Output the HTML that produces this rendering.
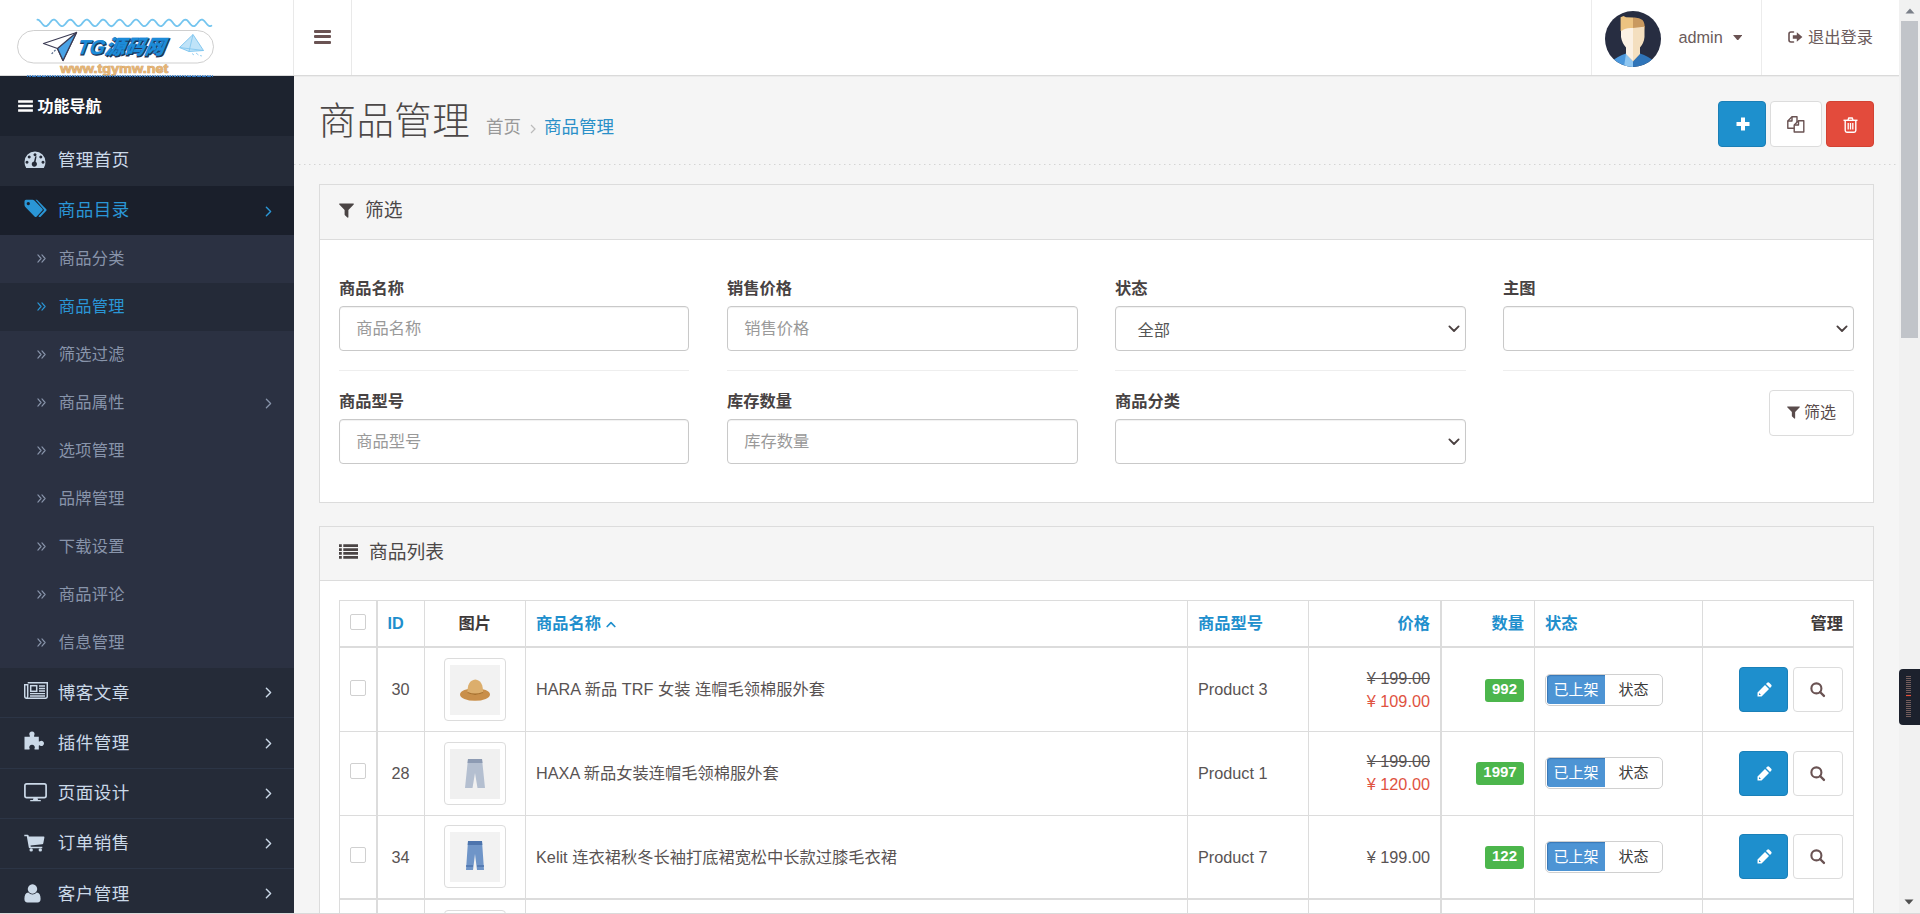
<!DOCTYPE html>
<html lang="zh-CN">
<head>
<meta charset="utf-8">
<title>商品管理</title>
<style>
*{box-sizing:border-box;margin:0;padding:0}
html,body{width:1920px;height:914px;overflow:hidden;background:#f5f5f5}
body{position:relative;font-family:"Liberation Sans","Noto Sans CJK SC",sans-serif;font-size:16.25px;color:#4c4646;line-height:1.42857}
svg{display:block}
a{color:inherit;text-decoration:none}
ul{list-style:none}

/* ---------- header ---------- */
#header{position:absolute;left:0;top:0;width:1899px;height:76px;background:#fff;border-bottom:1px solid #dadada;box-shadow:0 1px 0 #ececec;z-index:5}
#logo{position:absolute;left:0;top:0;width:294px;height:75px;border-right:1px solid #e9e9e9}
#burger{position:absolute;left:294px;top:0;width:58px;height:75px;border-right:1px solid #e9e9e9}
#burger i{position:absolute;left:20px;width:17px;height:3px;background:#6a5353;border-radius:1px}
#user{position:absolute;left:1591px;top:0;width:171px;height:75px;border-left:1px solid #ececec;border-right:1px solid #ececec}
#user .name{position:absolute;left:86.5px;top:26px;font-size:16.25px;line-height:22px;color:#6b5b5b}
#user .caret{position:absolute;left:141px;top:35px;width:0;height:0;border-left:4.7px solid transparent;border-right:4.7px solid transparent;border-top:5.5px solid #6a5353}
#logout{position:absolute;left:1762px;top:0;width:137px;height:75px}
#logout .t{position:absolute;left:46px;top:25px;font-size:16.25px;line-height:24px;color:#6b5b5b;white-space:nowrap}

/* ---------- sidebar ---------- */
#side{position:absolute;left:0;top:76px;width:294px;height:838px;background:#2b3142;z-index:6;overflow:hidden}
#side .navh{height:60px;background:#1d232f;color:#fff;font-size:16px;font-weight:bold;position:relative}
#side .navh span{position:absolute;left:37.5px;top:18.7px;line-height:24px}
#side li.m{height:50px;background:#252b38;position:relative;color:#cbd9e8;font-size:17.5px}
#side li.m + li.m{border-top:1px solid #2c3546}
#side li.m .tx{position:absolute;left:57.8px;top:12px;letter-spacing:.5px;line-height:25px;white-space:nowrap}
#side li.m .ic{position:absolute;left:24px;top:14px}
#side li.m .ar{position:absolute;left:264.5px;top:19.5px}
#side li.m + li.m.act{border-top:none}
#side li.m.act{background:#1a1f2b;color:#2a96d6}
#side li.m.act .tx{top:12px}
#side li.m.act .ar{top:19.5px}
#side li.s{height:48.03px;background:#2b3142;position:relative;color:#8894aa;font-size:16.25px}
#side li.s .tx{position:absolute;left:58.7px;top:10.5px;letter-spacing:.25px;line-height:24px;white-space:nowrap}
#side li.s .dd{position:absolute;left:37px;top:18.5px}
#side li.s .ar{position:absolute;left:264.5px;top:18.5px}
#side li.s.act{background:#242a38;color:#2a96d6}

/* ---------- content ---------- */
#main{position:absolute;left:294px;top:76px;width:1605px;height:838px;background:#f5f5f5;overflow:hidden}
#ph{position:absolute;left:0;top:0;width:1605px;height:89px;background:repeating-linear-gradient(90deg,#d4d4d4 0,#d4d4d4 1px,#e6e6e6 1px,#e6e6e6 2px,transparent 2px,transparent 5px) left bottom/100% 1px no-repeat}
#ph h1{position:absolute;left:24.5px;letter-spacing:.4px;top:18px;font-size:37.5px;font-weight:300;line-height:54px;color:#4c4848;white-space:nowrap}
#ph .bc{position:absolute;left:192px;top:39px;font-size:17.5px;line-height:25px;color:#999;white-space:nowrap}
#ph .bc b{font-weight:normal;color:#2b90c8}
.tb{position:absolute;top:25px;height:46px;border-radius:4px}
.panel{position:absolute;left:25px;width:1555px;background:#fff;border:1px solid #dcdcdc}
.panel .hd{height:55px;background:#f5f5f5;border-bottom:1px solid #dcdcdc;position:relative;font-size:18.75px;color:#4c4848}
.panel .hd .tx{position:absolute;top:12px;line-height:27px;white-space:nowrap}
.panel .hd svg{position:absolute}
label.l{position:absolute;font-weight:bold;font-size:16.25px;line-height:22px;color:#474242;white-space:nowrap}
.inp{position:absolute;width:350px;height:45px;border:1px solid #c9c9c9;border-radius:4px;background:#fff;font-size:16.25px;color:#999;line-height:43px;padding-left:16.3px;white-space:nowrap;box-shadow:inset 0 1px 1px rgba(0,0,0,.06)}
.inp.sel{color:#555}
.inp .chev{position:absolute;right:5px;top:18px}
.hr{position:absolute;width:350px;height:1px;background:#eee}

/* table */
#tbl{position:absolute;left:19px;top:73px;width:1516px}
.c{position:absolute;white-space:nowrap}
.vl{position:absolute;top:0;width:1px;background:#dcdcdc}
.hl{position:absolute;left:0;height:1px;background:#dcdcdc}
.th{position:absolute;font-weight:bold;font-size:16.25px;line-height:22px;white-space:nowrap;color:#3f3a3a}
.th.a{color:#1e8fcd}
.cb{position:absolute;width:16px;height:16px;border:1px solid #d0d0d0;border-radius:2px;background:#fff}
.thumb{position:absolute;width:62px;height:63px;border:1px solid #dcdcdc;border-radius:4px;background:#fff}
.thumb .im{position:absolute;left:5px;top:6px;width:50px;height:50px;background:#f0f0f0;overflow:hidden}
.td{position:absolute;font-size:16.25px;line-height:22px;white-space:nowrap;color:#595353}
.badge{position:absolute;height:23px;border-radius:3px;background:#4cb64c;color:#fff;font-weight:bold;font-size:15px;line-height:20px;text-align:center}
.tog{position:absolute;width:118px;height:32px;border:1px solid #d0d0d0;border-radius:5px;background:#fff;overflow:hidden;font-size:15px;line-height:27px}
.tog .on{position:absolute;left:1px;top:0;width:58px;height:29px;padding-top:1px;box-shadow:inset 1px 1px 1px rgba(20,70,130,.35);background:#4d94d4;color:#fff;text-align:center;border-radius:3px 0 0 3px}
.tog .off{position:absolute;left:59px;top:1px;width:57px;height:28px;color:#3a3a3a;text-align:center}
.be{position:absolute;width:49px;height:45px;border-radius:4px;background:#1e8fcd;border:1px solid #1a80b8}
.bs{position:absolute;width:50px;height:45px;border-radius:4px;background:#fff;border:1px solid #dcdcdc}

/* scrollbar */
#sb{position:absolute;left:1899px;top:0;width:21px;height:914px;background:#f1f1f1;z-index:9}
#sb .thumb2{position:absolute;left:2px;top:21px;width:17px;height:317px;background:#c1c4c9}
#wd{position:absolute;left:1899px;top:669px;width:21px;height:56px;background:#1c212d;border-radius:4px 0 0 4px;z-index:10}
#bl{position:absolute;left:0;top:913px;width:1920px;height:1px;background:#dadada;z-index:11}
</style>
</head>
<body>

<div id="header">
  <div id="logo">
    <svg width="293" height="76" viewBox="0 0 293 76">
      <path d="M37.4 19.60 L38.4 19.84 L39.4 20.52 L40.4 21.54 L41.4 22.76 L42.4 24.00 L43.4 25.08 L44.4 25.85 L45.4 26.19 L46.4 26.05 L47.4 25.47 L48.4 24.51 L49.4 23.32 L50.4 22.06 L51.4 20.93 L52.4 20.09 L53.4 19.65 L54.4 19.68 L55.4 20.17 L56.4 21.06 L57.4 22.21 L58.4 23.46 L59.4 24.64 L60.4 25.56 L61.4 26.10 L62.4 26.17 L63.4 25.78 L64.4 24.97 L65.4 23.86 L66.4 22.61 L67.4 21.41 L68.4 20.42 L69.4 19.78 L70.4 19.60 L71.4 19.90 L72.4 20.63 L73.4 21.68 L74.4 22.91 L75.4 24.14 L76.4 25.19 L77.4 25.91 L78.4 26.20 L79.4 26.01 L80.4 25.37 L81.4 24.37 L82.4 23.16 L83.4 21.92 L84.4 20.81 L85.4 20.01 L86.4 19.62 L87.4 19.71 L88.4 20.26 L89.4 21.18 L90.4 22.36 L91.4 23.61 L92.4 24.76 L93.4 25.64 L94.4 26.13 L95.4 26.15 L96.4 25.70 L97.4 24.85 L98.4 23.71 L99.4 22.46 L100.4 21.27 L101.4 20.32 L102.4 19.74 L103.4 19.61 L104.4 19.96 L105.4 20.74 L106.4 21.82 L107.4 23.06 L108.4 24.28 L109.4 25.30 L110.4 25.97 L111.4 26.20 L112.4 25.95 L113.4 25.26 L114.4 24.24 L115.4 23.01 L116.4 21.78 L117.4 20.70 L118.4 19.94 L119.4 19.61 L120.4 19.75 L121.4 20.35 L122.4 21.32 L123.4 22.51 L124.4 23.76 L125.4 24.89 L126.4 25.73 L127.4 26.16 L128.4 26.12 L129.4 25.62 L130.4 24.72 L131.4 23.56 L132.4 22.31 L133.4 21.14 L134.4 20.23 L135.4 19.70 L136.4 19.63 L137.4 20.04 L138.4 20.85 L139.4 21.97 L140.4 23.21 L141.4 24.42 L142.4 25.40 L143.4 26.02 L144.4 26.20 L145.4 25.89 L146.4 25.16 L147.4 24.10 L148.4 22.86 L149.4 21.63 L150.4 20.59 L151.4 19.88 L152.4 19.60 L153.4 19.80 L154.4 20.45 L155.4 21.45 L156.4 22.66 L157.4 23.91 L158.4 25.01 L159.4 25.80 L160.4 26.18 L161.4 26.08 L162.4 25.53 L163.4 24.59 L164.4 23.41 L165.4 22.16 L166.4 21.02 L167.4 20.14 L168.4 19.66 L169.4 19.66 L170.4 20.11 L171.4 20.97 L172.4 22.11 L173.4 23.37 L174.4 24.55 L175.4 25.50 L176.4 26.07 L177.4 26.18 L178.4 25.82 L179.4 25.04 L180.4 23.95 L181.4 22.71 L182.4 21.50 L183.4 20.48 L184.4 19.82 L185.4 19.60 L186.4 19.86 L187.4 20.55 L188.4 21.59 L189.4 22.81 L190.4 24.05 L191.4 25.12 L192.4 25.87 L193.4 26.19 L194.4 26.04 L195.4 25.43 L196.4 24.46 L197.4 23.27 L198.4 22.02 L199.4 20.89 L200.4 20.06 L201.4 19.64 L202.4 19.69 L203.4 20.20 L204.4 21.10 L205.4 22.26 L206.4 23.51 L207.4 24.68 L208.4 25.59 L209.4 26.11 L210.4 26.17 L211.4 25.75" fill="none" stroke="#74c5ef" stroke-width="1.8" stroke-linecap="round"/>
      <rect x="17.5" y="30.5" width="196" height="32.5" rx="16.25" fill="#fff" stroke="#cfcfcf" stroke-width="1"/>
      <path d="M43.5 43.5 L76.5 32.5 L63 60.5 L57.5 48.5 Z" fill="#fff" stroke="#3c3c54" stroke-width="1.3" stroke-linejoin="round"/>
      <path d="M76.5 32.5 L63 60.5 L57.5 48.5 Z" fill="#4aa3e6" stroke="#3c3c54" stroke-width="1.3" stroke-linejoin="round"/>
      <path d="M55.5 50 L51 54.5" stroke="#56698a" stroke-width="1.2" stroke-dasharray="2 1.5"/>
      <g font-family="'Liberation Sans','Noto Sans CJK SC',sans-serif" font-size="20" font-weight="900" font-style="italic" transform="skewX(-10) translate(6.2 0)"><text x="80.8" y="54.6" fill="#1d3557" stroke="#1d3557" stroke-width="1.2" textLength="87" lengthAdjust="spacingAndGlyphs">TG源码网</text><text x="80" y="53.8" fill="#1c8bd8" stroke="#1c8bd8" stroke-width="0.3" textLength="87" lengthAdjust="spacingAndGlyphs">TG源码网</text></g>
      <path d="M179.5 47.5 L193 34.5 L203.5 50.5 L189 51.5 Z" fill="#bfe3f8" stroke="#7cc4ee" stroke-width="0.9" stroke-linejoin="round"/>
      <path d="M179.5 47.5 L203.5 50.5 M193 34.5 L189 51.5" stroke="#7cc4ee" stroke-width="0.8" fill="none"/>
      <path d="M192 53.5 l2 1.5 M196 53 l2.5 2 M200 55.5 l2 0.5" stroke="#9ed3f3" stroke-width="1"/>
      <text x="60.3" y="73" font-family="'Liberation Sans',sans-serif" font-size="13.5" font-weight="bold" fill="#e6b473" stroke="#c79a63" stroke-width="0.7" paint-order="stroke" textLength="108" lengthAdjust="spacingAndGlyphs">www.tgymw.net</text>
      <path d="M27 75.7 H213" stroke="#2f78c4" stroke-width="0.9" stroke-dasharray="1.5 1"/>
    </svg>
  </div>
  <div id="burger"><i style="top:30px"></i><i style="top:35px"></i><i style="top:41px"></i></div>
  <div id="user">
    <svg style="position:absolute;left:13px;top:11px" width="56" height="56" viewBox="0 0 56 56">
      <defs><clipPath id="av"><circle cx="28" cy="28" r="28"/></clipPath></defs>
      <g clip-path="url(#av)">
        <rect width="56" height="56" fill="#272d41"/>
        <path d="M4 52 Q13 45 21 42.500 L28 50.500 L28 56 L4 56 Z" fill="#4a97dc"/>
        <path d="M52 52 Q43 45 35 42.500 L28 50.500 L28 56 L52 56 Z" fill="#2f74b8"/>
        <path d="M21 42.500 L28 50.500 L28 56 L19 56 Z" fill="#8ec6f1"/>
        <path d="M16 17 L16 26 Q17 32 21 36.500 L21 43 L28 50.500 L28 14 Z" fill="#fbf1e4"/>
        <path d="M28 14 L28 50.500 L35 43 L35 36.500 Q39 32 39.500 26 L39.500 15 Z" fill="#f4dfbf"/>
        <path d="M15.600 20 L15.600 6.300 L18.500 5 L21 6.200 L28 6.500 L28 17 Q20 16.500 17.300 19.500 Z" fill="#ecc381"/>
        <path d="M28 6.500 Q34 6 37.500 9 Q40.200 12 39.700 19 L39 15.800 L28 17 Z" fill="#c9995f"/>
      </g>
    </svg>
    <span class="name">admin</span><svg style="position:absolute;left:140.800px;top:34.800px" width="9.500" height="5.600" viewBox="0 0 9.5 5.6"><path d="M0 0 H9.500 L4.750 5.600 Z" fill="#6a5353"/></svg>
  </div>
  <div id="logout">
    <svg style="position:absolute;left:26px;top:31px" width="15" height="12" viewBox="0 0 15 12"><path d="M5.500 1 H3 Q1 1 1 3 V9 Q1 11 3 11 H5.500" fill="none" stroke="#6a5353" stroke-width="1.600" stroke-linecap="round"/><path d="M4.800 4.300 H8.800 V1.300 L14.400 6 L8.800 10.700 V7.700 H4.800 Z" fill="#6a5353"/></svg>
    <span class="t">退出登录</span>
  </div>
</div>


<div id="side">
  <div class="navh"><div style="position:absolute;left:27px;top:0;width:186px;height:1px;background:repeating-linear-gradient(90deg,#2f78c4 0,#2f78c4 1.5px,transparent 1.5px,transparent 2.5px)"></div><svg style="position:absolute;left:18px;top:23.5px" width="15" height="12" viewBox="0 0 16 13"><path d="M0 0.300 H16 V3 H0 Z M0 5.200 H16 V7.900 H0 Z M0 10.100 H16 V12.800 H0 Z" fill="#fff"/></svg><span>功能导航</span></div>
  <ul>
    <li class="m" style="height:50px"><svg class="ic" style="top:15px" width="22" height="18" viewBox="0 0 22 18"><path fill-rule="evenodd" fill="currentColor" d="M11 0.5 A10.5 10.5 0 0 1 21.5 11 Q21.5 14.5 19.8 17 H2.2 Q0.5 14.500 0.5 11 A10.5 10.5 0 0 1 11 0.5 Z M11 2.2 a1.5 1.5 0 1 0 0.01 0 Z M5.2 4.6 a1.5 1.5 0 1 0 0.01 0 Z M16.8 4.6 a1.5 1.5 0 1 0 0.01 0 Z M3 9.8 a1.5 1.5 0 1 0 0.01 0 Z M19 9.8 a1.5 1.5 0 1 0 0.01 0 Z M12.6 5.2 L11.6 10.8 A2.6 2.6 0 1 1 10 10.5 L11.3 5 Z"/></svg><span class="tx">管理首页</span></li>
    <li class="m act" style="height:49.4px"><svg class="ic" style="top:13px" width="23" height="19" viewBox="0 0 23 19"><path fill="currentColor" d="M11.5 0.8 H13 L22.3 10.2 Q23 11 22.3 11.800 L16.6 17.700 Q15.8 18.4 15 17.8 L14.4 17.2 L19.6 11.800 Q20.3 11 19.6 10.2 Z"/><path fill-rule="evenodd" fill="currentColor" d="M0.5 2.3 Q0.5 0.8 2 0.8 H8.6 Q9.6 0.8 10.4 1.600 L18.400 9.800 Q19.200 10.700 18.400 11.600 L12.5 17.700 Q11.7 18.400 10.800 17.700 L1.800 8.600 Q0.5 7.300 0.5 6 Z M4.3 3 a1.6 1.600 0 1 0 0.01 0 Z"/></svg><span class="tx">商品目录</span><svg class="ar" width="7" height="11" viewBox="0 0 8 13"><path d="M1.5 1.5 L6.5 6.5 L1.5 11.5" fill="none" stroke="currentColor" stroke-width="1.7" stroke-linecap="round" stroke-linejoin="round"/></svg></li>
    <li class="s"><svg class="dd" width="9" height="9" viewBox="0 0 10 10"><path d="M1 1 L4.5 5 L1 9 M5.5 1 L9 5 L5.5 9" fill="none" stroke="currentColor" stroke-width="1.3" stroke-linecap="round" stroke-linejoin="round"/></svg><span class="tx">商品分类</span></li>
    <li class="s act"><svg class="dd" width="9" height="9" viewBox="0 0 10 10"><path d="M1 1 L4.5 5 L1 9 M5.5 1 L9 5 L5.5 9" fill="none" stroke="currentColor" stroke-width="1.3" stroke-linecap="round" stroke-linejoin="round"/></svg><span class="tx">商品管理</span></li>
    <li class="s"><svg class="dd" width="9" height="9" viewBox="0 0 10 10"><path d="M1 1 L4.5 5 L1 9 M5.5 1 L9 5 L5.5 9" fill="none" stroke="currentColor" stroke-width="1.3" stroke-linecap="round" stroke-linejoin="round"/></svg><span class="tx">筛选过滤</span></li>
    <li class="s"><svg class="dd" width="9" height="9" viewBox="0 0 10 10"><path d="M1 1 L4.5 5 L1 9 M5.5 1 L9 5 L5.5 9" fill="none" stroke="currentColor" stroke-width="1.3" stroke-linecap="round" stroke-linejoin="round"/></svg><span class="tx">商品属性</span><svg class="ar" width="7" height="11" viewBox="0 0 8 13"><path d="M1.5 1.5 L6.5 6.5 L1.5 11.5" fill="none" stroke="currentColor" stroke-width="1.5" stroke-linecap="round" stroke-linejoin="round"/></svg></li>
    <li class="s"><svg class="dd" width="9" height="9" viewBox="0 0 10 10"><path d="M1 1 L4.5 5 L1 9 M5.5 1 L9 5 L5.5 9" fill="none" stroke="currentColor" stroke-width="1.3" stroke-linecap="round" stroke-linejoin="round"/></svg><span class="tx">选项管理</span></li>
    <li class="s"><svg class="dd" width="9" height="9" viewBox="0 0 10 10"><path d="M1 1 L4.5 5 L1 9 M5.5 1 L9 5 L5.5 9" fill="none" stroke="currentColor" stroke-width="1.3" stroke-linecap="round" stroke-linejoin="round"/></svg><span class="tx">品牌管理</span></li>
    <li class="s"><svg class="dd" width="9" height="9" viewBox="0 0 10 10"><path d="M1 1 L4.5 5 L1 9 M5.5 1 L9 5 L5.5 9" fill="none" stroke="currentColor" stroke-width="1.3" stroke-linecap="round" stroke-linejoin="round"/></svg><span class="tx">下载设置</span></li>
    <li class="s"><svg class="dd" width="9" height="9" viewBox="0 0 10 10"><path d="M1 1 L4.5 5 L1 9 M5.5 1 L9 5 L5.5 9" fill="none" stroke="currentColor" stroke-width="1.3" stroke-linecap="round" stroke-linejoin="round"/></svg><span class="tx">商品评论</span></li>
    <li class="s"><svg class="dd" width="9" height="9" viewBox="0 0 10 10"><path d="M1 1 L4.5 5 L1 9 M5.5 1 L9 5 L5.5 9" fill="none" stroke="currentColor" stroke-width="1.3" stroke-linecap="round" stroke-linejoin="round"/></svg><span class="tx">信息管理</span></li>
    <li class="m" style="height:49.6px"><svg class="ic" style="top:14.3px" width="24" height="17" viewBox="0 0 24 17"><g fill="none" stroke="currentColor" stroke-width="1.5"><path d="M3.7 0.7 H23.300 V14.300 Q23.300 16.300 21.300 16.300 H2.700 Q0.700 16.300 0.700 14.300 V2.700 H3.700 V14.300 Q3.700 15.300 2.700 15.300"/><rect x="6.7" y="3.7" width="6" height="5.6" stroke-width="1.5"/><path d="M15 4 H21 M15 6.500 H21 M15 9 H21 M6 11.700 H21 M6 14 H21" stroke-width="1.3"/></g></svg><span class="tx" style="top:13px">博客文章</span><svg class="ar" width="7" height="11" viewBox="0 0 8 13"><path d="M1.5 1.5 L6.5 6.5 L1.5 11.5" fill="none" stroke="currentColor" stroke-width="1.7" stroke-linecap="round" stroke-linejoin="round"/></svg></li>
    <li class="m" style="height:50.8px"><svg class="ic" style="top:13px" width="21" height="19" viewBox="0 0 21 19"><path fill="currentColor" d="M0.5 5.800 H5.400 Q6.300 5.800 5.800 4.700 Q4.800 3 5.600 1.800 Q6.500 0.500 8 0.500 Q9.600 0.500 10.300 1.800 Q11 3 10.100 4.700 Q9.700 5.800 10.600 5.800 H14.800 V10 Q14.800 10.900 15.900 10.300 Q17.500 9.400 18.800 10.200 Q20.100 11.100 20 12.500 Q19.900 14 18.700 14.700 Q17.500 15.400 15.900 14.500 Q14.800 14 14.800 15 V18.500 H10.900 Q10.100 18.500 10.500 17.600 Q11.300 16 10.400 14.900 Q9.500 13.800 8 13.800 Q6.400 13.800 5.600 14.900 Q4.800 16 5.600 17.600 Q6 18.500 5.100 18.500 H0.500 Z"/></svg><span class="tx" style="top:12.6px">插件管理</span><svg class="ar" width="7" height="11" viewBox="0 0 8 13"><path d="M1.5 1.5 L6.5 6.5 L1.5 11.5" fill="none" stroke="currentColor" stroke-width="1.7" stroke-linecap="round" stroke-linejoin="round"/></svg></li>
    <li class="m"><svg class="ic" style="top:14px" width="23" height="19" viewBox="0 0 23 19"><rect x="0.9" y="0.9" width="21.2" height="13.700" rx="1.800" fill="none" stroke="currentColor" stroke-width="1.7"/><path d="M9.5 14.800 H13.500 L14 17 H9 Z M6.200 17 H16.800 V18.300 H6.200 Z" fill="currentColor"/></svg><span class="tx">页面设计</span><svg class="ar" width="7" height="11" viewBox="0 0 8 13"><path d="M1.5 1.5 L6.5 6.5 L1.5 11.5" fill="none" stroke="currentColor" stroke-width="1.7" stroke-linecap="round" stroke-linejoin="round"/></svg></li>
    <li class="m"><svg class="ic" style="top:15px" width="21" height="18" viewBox="0 0 21 18"><path fill="currentColor" d="M0.300 0.700 H3.600 Q4.400 0.700 4.600 1.600 L4.800 2.600 H19.700 Q20.600 2.600 20.400 3.500 L19.300 9.300 Q19.100 10.100 18.300 10.200 L6.500 11.500 L6.800 12.800 H18.300 V14.300 H5.800 Q5 14.300 4.800 13.500 L2.800 2.300 H0.300 Z"/><circle cx="7.200" cy="15.900" r="1.700" fill="currentColor"/><circle cx="16.300" cy="15.900" r="1.700" fill="currentColor"/></svg><span class="tx">订单销售</span><svg class="ar" width="7" height="11" viewBox="0 0 8 13"><path d="M1.5 1.5 L6.5 6.5 L1.5 11.5" fill="none" stroke="currentColor" stroke-width="1.7" stroke-linecap="round" stroke-linejoin="round"/></svg></li>
    <li class="m"><svg class="ic" style="top:15px" width="17" height="19" viewBox="0 0 17 19"><path fill="currentColor" d="M8.500 0.300 A4.700 4.700 0 1 1 8.490 0.300 Z M4.300 8.600 Q6.200 10.500 8.500 10.500 Q10.800 10.500 12.700 8.600 Q16.600 9 16.600 14.800 Q16.600 18.600 13.500 18.600 H3.500 Q0.400 18.600 0.400 14.800 Q0.400 9 4.300 8.600 Z"/></svg><span class="tx" style="top:12.6px">客户管理</span><svg class="ar" width="7" height="11" viewBox="0 0 8 13"><path d="M1.5 1.5 L6.5 6.5 L1.5 11.5" fill="none" stroke="currentColor" stroke-width="1.7" stroke-linecap="round" stroke-linejoin="round"/></svg></li>
  </ul>
</div>


<div id="main">
  <div id="ph">
    <h1>商品管理</h1>
    <div class="bc">首页<svg style="display:inline-block;margin:0 8px 0 9px;vertical-align:-1px" width="6" height="10" viewBox="0 0 6 10"><path d="M1 1 L5 5 L1 9" fill="none" stroke="#bbb" stroke-width="1.2"/></svg><b>商品管理</b></div>
    <div class="tb" style="left:1424px;width:48px;background:#1e90cd;border:1px solid #1b7fb6"><svg style="position:absolute;left:17px;top:15px" width="14" height="14" viewBox="0 0 14 14"><path d="M5 0.500 H9 V5 H13.500 V9 H9 V13.500 H5 V9 H0.500 V5 H5 Z" fill="#fff"/></svg></div>
    <div class="tb" style="left:1476px;width:52px;background:#fff;border:1px solid #dcdcdc"><svg style="position:absolute;left:16px;top:14px" width="18" height="17" viewBox="0 0 18 17"><g fill="#fff" stroke="#6a5353" stroke-width="1.400" stroke-linejoin="round"><path d="M5 0.800 H10 V12.200 H0.800 V5 Z"/><path d="M5 0.800 V5 H0.800" fill="none"/><path d="M11.500 4.800 H16.800 V16 H7.200 V9 Z"/><path d="M11.500 4.800 V9 H7.200" fill="none"/></g></svg></div>
    <div class="tb" style="left:1532px;width:48px;background:#e34b3c;border:1px solid #d24233"><svg style="position:absolute;left:16px;top:15px" width="15" height="16" viewBox="0 0 15 16"><g fill="none" stroke="#fff" stroke-width="1.400"><path d="M0.500 3.300 H14.500"/><path d="M5 3 L5.800 1 H9.200 L10 3"/><path d="M2.200 3.500 V13.500 Q2.200 15.200 3.900 15.200 H11.100 Q12.800 15.200 12.800 13.500 V3.500"/><path d="M5.200 6 V12.500 M7.500 6 V12.500 M9.800 6 V12.500" stroke-width="1.300"/></g></svg></div>
  </div>
  <div class="panel" style="top:108px;height:319px">
    <div class="hd"><svg style="left:19px;top:18px" width="15" height="15" viewBox="0 0 15 15"><path d="M0.600 0.500 H14.400 Q15.200 0.700 14.700 1.500 L9.400 6.900 V14.200 Q9.200 15 8.400 14.500 L5.900 12.200 Q5.600 11.900 5.600 11.500 V6.900 L0.300 1.500 Q-0.200 0.700 0.600 0.500 Z" fill="#4a4444"/></svg><span class="tx" style="left:45px">筛选</span></div>
    <label class="l" style="left:19px;top:92px">商品名称</label>
    <div class="inp" style="left:19px;top:121px">商品名称</div>
    <div class="hr" style="left:19px;top:185px"></div>
    <label class="l" style="left:407px;top:92px">销售价格</label>
    <div class="inp" style="width:351px;left:407px;top:121px">销售价格</div>
    <div class="hr" style="width:351px;left:407px;top:185px"></div>
    <label class="l" style="left:795px;top:92px">状态</label>
    <div class="inp sel" style="width:351px;left:795px;top:121px;padding-left:21.5px;line-height:46px">全部<svg class="chev" width="12" height="8.300" viewBox="0 0 13 9"><path d="M1.5 1.5 L6.5 6.5 L11.500 1.5" fill="none" stroke="#4a4040" stroke-width="2" stroke-linecap="round" stroke-linejoin="round"/></svg></div>
    <div class="hr" style="width:351px;left:795px;top:185px"></div>
    <label class="l" style="left:1183px;top:92px">主图</label>
    <div class="inp sel" style="width:351px;left:1183px;top:121px"><svg class="chev" width="12" height="8.300" viewBox="0 0 13 9"><path d="M1.5 1.5 L6.5 6.5 L11.500 1.5" fill="none" stroke="#4a4040" stroke-width="2" stroke-linecap="round" stroke-linejoin="round"/></svg></div>
    <div class="hr" style="width:351px;left:1183px;top:185px"></div>
    <label class="l" style="left:19px;top:205px">商品型号</label>
    <div class="inp" style="left:19px;top:234px">商品型号</div>
    <label class="l" style="left:407px;top:205px">库存数量</label>
    <div class="inp" style="width:351px;left:407px;top:234px">库存数量</div>
    <label class="l" style="left:795px;top:205px">商品分类</label>
    <div class="inp sel" style="width:351px;left:795px;top:234px"><svg class="chev" width="12" height="8.300" viewBox="0 0 13 9"><path d="M1.5 1.5 L6.5 6.5 L11.500 1.5" fill="none" stroke="#4a4040" stroke-width="2" stroke-linecap="round" stroke-linejoin="round"/></svg></div>
    <div style="position:absolute;left:1449px;top:205px;width:85px;height:46px;border:1px solid #dcdcdc;border-radius:4px;background:#fff"><svg style="position:absolute;left:17px;top:15px" width="13" height="13" viewBox="0 0 15 15"><path d="M0.600 0.500 H14.400 Q15.200 0.700 14.700 1.500 L9.400 6.900 V14.200 Q9.200 15 8.400 14.500 L5.900 12.200 Q5.600 11.900 5.600 11.500 V6.900 L0.300 1.500 Q-0.200 0.700 0.600 0.500 Z" fill="#5a4c4c"/></svg><span style="position:absolute;left:34px;top:10px;font-size:16px;line-height:23px;color:#5a4c4c;white-space:nowrap">筛选</span></div>
  </div>
  <div class="panel" style="top:450px;height:420px;border-bottom:none">
    <div class="hd" style="height:54px"><svg style="left:19px;top:17.3px" width="19" height="15" viewBox="0 0 19 15"><path d="M0 0.300 H2.800 V3 H0 Z M4.300 0.300 H19 V3 H4.300 Z M0 4.200 H2.800 V6.900 H0 Z M4.300 4.200 H19 V6.900 H4.300 Z M0 8.100 H2.800 V10.800 H0 Z M4.300 8.100 H19 V10.800 H4.300 Z M0 12 H2.800 V14.700 H0 Z M4.300 12 H19 V14.700 H4.300 Z" fill="#4a4444"/></svg><span class="tx" style="left:49px">商品列表</span></div>
    <div id="tbl">
      <div class="vl" style="left:0px;width:1px;height:330px"></div>
      <div class="vl" style="left:37px;width:2px;height:330px"></div>
      <div class="vl" style="left:85px;width:1px;height:330px"></div>
      <div class="vl" style="left:186px;width:1px;height:330px"></div>
      <div class="vl" style="left:848px;width:1px;height:330px"></div>
      <div class="vl" style="left:969px;width:1px;height:330px"></div>
      <div class="vl" style="left:1101px;width:2px;height:330px"></div>
      <div class="vl" style="left:1195px;width:1px;height:330px"></div>
      <div class="vl" style="left:1363px;width:1px;height:330px"></div>
      <div class="vl" style="left:1514px;width:1px;height:330px"></div>
      <div class="hl" style="top:0px;height:1px;width:1515px"></div>
      <div class="hl" style="top:46px;height:2px;width:1515px"></div>
      <div class="hl" style="top:131px;height:1px;width:1515px"></div>
      <div class="hl" style="top:215px;height:1px;width:1515px"></div>
      <div class="hl" style="top:298px;height:2px;width:1515px"></div>
      <div class="cb" style="left:11px;top:14px"></div>
      <div class="th a" style="left:48.6px;top:12px">ID</div>
      <div class="th" style="left:119.500px;top:12px">图片</div>
      <div class="th a" style="left:197px;top:12px">商品名称<svg style="display:inline-block;margin-left:4.5px;vertical-align:1px" width="10" height="7" viewBox="0 0 10 7"><path d="M1.200 5.500 L5 1.700 L8.800 5.500" fill="none" stroke="#1e8fcd" stroke-width="1.700" stroke-linecap="round" stroke-linejoin="round"/></svg></div>
      <div class="th a" style="left:859px;top:12px">商品型号</div>
      <div class="th a" style="right:425px;top:12px">价格</div>
      <div class="th a" style="right:331px;top:12px">数量</div>
      <div class="th a" style="left:1206px;top:12px">状态</div>
      <div class="th" style="right:12px;top:12px">管理</div>
      <div class="cb" style="left:11px;top:80px"></div>
      <div class="td" style="left:52.500px;top:78px">30</div>
      <div class="thumb" style="left:105px;top:58px"><div class="im"><svg width="50" height="50" viewBox="0 0 50 50"><rect width="50" height="50" fill="#f2f2f2"/><ellipse cx="25" cy="29.500" rx="15" ry="6.300" fill="#c98f4a"/><path d="M17.500 28 Q17 15.500 25.300 14.500 Q33.500 15.500 33 28 Q25 31.500 17.500 28 Z" fill="#dcae6c"/><path d="M17.500 27.500 Q25 31 33 27.500" stroke="#a8712f" stroke-width="1.300" fill="none"/></svg></div></div>
      <div class="td" style="left:197px;top:78px">HARA 新品 TRF 女装 连帽毛领棉服外套</div>
      <div class="td" style="left:859px;top:78px">Product 3</div>
      <div class="td" style="right:425px;top:67px;text-decoration:line-through">¥ 199.00</div>
      <div class="td" style="right:425px;top:90px;color:#e0533f">¥ 109.00</div>
      <div class="badge" style="right:331px;top:79px;width:39px">992</div>
      <div class="tog" style="left:1206px;top:74px"><span class="on">已上架</span><span class="off">状态</span></div>
      <div class="be" style="left:1400px;top:67px"><svg style="position:absolute;left:15.600px;top:13px" width="17" height="17" viewBox="0 0 17 17"><path d="M11.200 1.800 Q12.200 0.800 13.200 1.800 L15.200 3.800 Q16.200 4.800 15.200 5.800 L14 7 L10 3 Z M9 4 L13 8 L5.500 15.500 H1.500 V11.500 Z M3 12 V14 H5 Z" fill="#fff" fill-rule="evenodd"/></svg></div>
      <div class="bs" style="left:1454px;top:67px"><svg style="position:absolute;left:16.300px;top:14px" width="15.500" height="15.500" viewBox="0 0 17 17"><circle cx="7" cy="7" r="5.500" fill="none" stroke="#6a5353" stroke-width="2.300"/><path d="M11 11 L15.300 15.300" stroke="#6a5353" stroke-width="2.600" stroke-linecap="round"/></svg></div>
      <div class="cb" style="left:11px;top:163px"></div>
      <div class="td" style="left:52.500px;top:161.6px">28</div>
      <div class="thumb" style="left:105px;top:142px"><div class="im"><svg width="50" height="50" viewBox="0 0 50 50"><rect width="50" height="50" fill="#f0f0f0"/><path d="M18 10 H32 L35 39 H27.500 L25 24 L22.500 39 H15 Z" fill="#b4bfd0"/><path d="M18 10 H32 L32.500 14 H17.500 Z" fill="#8d9bb3"/></svg></div></div>
      <div class="td" style="left:197px;top:161.6px">HAXA 新品女装连帽毛领棉服外套</div>
      <div class="td" style="left:859px;top:161.6px">Product 1</div>
      <div class="td" style="right:425px;top:150px;text-decoration:line-through">¥ 199.00</div>
      <div class="td" style="right:425px;top:173px;color:#e0533f">¥ 120.00</div>
      <div class="badge" style="right:331px;top:162px;width:48px">1997</div>
      <div class="tog" style="left:1206px;top:157px"><span class="on">已上架</span><span class="off">状态</span></div>
      <div class="be" style="left:1400px;top:151px"><svg style="position:absolute;left:15.600px;top:13px" width="17" height="17" viewBox="0 0 17 17"><path d="M11.200 1.800 Q12.200 0.800 13.200 1.800 L15.200 3.800 Q16.200 4.800 15.200 5.800 L14 7 L10 3 Z M9 4 L13 8 L5.500 15.500 H1.500 V11.500 Z M3 12 V14 H5 Z" fill="#fff" fill-rule="evenodd"/></svg></div>
      <div class="bs" style="left:1454px;top:151px"><svg style="position:absolute;left:16.300px;top:14px" width="15.500" height="15.500" viewBox="0 0 17 17"><circle cx="7" cy="7" r="5.500" fill="none" stroke="#6a5353" stroke-width="2.300"/><path d="M11 11 L15.300 15.300" stroke="#6a5353" stroke-width="2.600" stroke-linecap="round"/></svg></div>
      <div class="cb" style="left:11px;top:247px"></div>
      <div class="td" style="left:52.500px;top:245.6px">34</div>
      <div class="thumb" style="left:105px;top:225px"><div class="im"><svg width="50" height="50" viewBox="0 0 50 50"><rect width="50" height="50" fill="#f2f2f2"/><path d="M18 9 H32 L34 38 H27 L25 22 L23 38 H16 Z" fill="#6f95c8"/><path d="M18 9 H32 L32.300 13 H17.700 Z" fill="#4d74ad"/><path d="M16 34 H23 M27 34 H34" stroke="#4d74ad" stroke-width="1.500"/></svg></div></div>
      <div class="td" style="left:197px;top:245.6px">Kelit 连衣裙秋冬长袖打底裙宽松中长款过膝毛衣裙</div>
      <div class="td" style="left:859px;top:245.6px">Product 7</div>
      <div class="td" style="right:425px;top:245.6px">¥ 199.00</div>
      <div class="badge" style="right:331px;top:246px;width:39px">122</div>
      <div class="tog" style="left:1206px;top:241px"><span class="on">已上架</span><span class="off">状态</span></div>
      <div class="be" style="left:1400px;top:234px"><svg style="position:absolute;left:15.600px;top:13px" width="17" height="17" viewBox="0 0 17 17"><path d="M11.200 1.800 Q12.200 0.800 13.200 1.800 L15.200 3.800 Q16.200 4.800 15.200 5.800 L14 7 L10 3 Z M9 4 L13 8 L5.500 15.500 H1.500 V11.500 Z M3 12 V14 H5 Z" fill="#fff" fill-rule="evenodd"/></svg></div>
      <div class="bs" style="left:1454px;top:234px"><svg style="position:absolute;left:16.300px;top:14px" width="15.500" height="15.500" viewBox="0 0 17 17"><circle cx="7" cy="7" r="5.500" fill="none" stroke="#6a5353" stroke-width="2.300"/><path d="M11 11 L15.300 15.300" stroke="#6a5353" stroke-width="2.600" stroke-linecap="round"/></svg></div>
      <div class="thumb" style="left:105px;top:310px"></div>
    </div>
  </div>
</div>


<div id="sb"><svg style="position:absolute;left:6px;top:8px" width="10" height="6" viewBox="0 0 10 6"><path d="M5 0.500 L9.500 5.500 H0.500 Z" fill="#7a7f88"/></svg><div class="thumb2"></div><svg style="position:absolute;left:5px;top:899px" width="10" height="6" viewBox="0 0 10 6"><path d="M0.500 0.500 H9.500 L5 5.500 Z" fill="#505050"/></svg></div>
<div id="wd"><svg width="21" height="56" viewBox="0 0 21 56"><path d="M7 7.500 H12 M7 9.500 H12 M7 11.500 H12 M7 13.500 H12 M7 15.500 H12 M7 17.500 H12 M7 19.500 H12 M7 21.500 H12 M7 23.500 H12 M7 31.500 H12 M7 33.500 H12 M7 35.500 H12 M7 37.500 H12 M7 39.500 H12 M7 41.500 H12 M7 43.500 H12 M7 45.500 H12 M7 47.500 H12" stroke="#8c6f6a" stroke-width="0.800"/><path d="M7 26.500 H12" stroke="#e8503a" stroke-width="1.200"/></svg></div>
<div id="bl"></div>


</body>
</html>
